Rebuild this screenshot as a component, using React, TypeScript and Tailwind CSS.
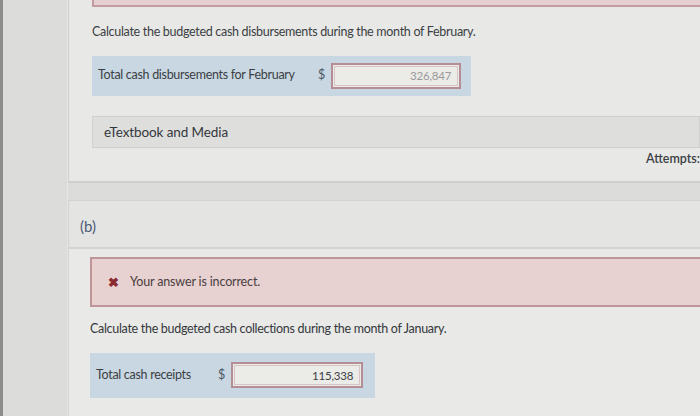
import React from 'react';

const font = { fontFamily: 'Lato, "Open Sans", sans-serif' };

const AnswerRow: React.FC<{ label: string; value: string; muted?: boolean; labelWidth: string; inputWidth: string; boxWidth: string; height: string }> = ({
  label,
  value,
  muted,
  labelWidth,
  inputWidth,
  boxWidth,
  height,
}) => (
  <div className={`flex items-center bg-[#c8d7e2] pl-[6px] ${boxWidth} ${height}`}>
    <span className={`text-[12.5px] tracking-[-0.3px] text-[#3b3f44] ${labelWidth}`}>{label}</span>
    <span className="mr-[6px] text-[12.5px] text-[#4a5663]">$</span>
    <div className={`h-[26px] border-2 border-[#b58e95] bg-[#ebebe8] p-[1px] ${inputWidth}`}>
      <div className="flex h-full items-center justify-end border border-[#d9c3c6] pr-[6px]">
        <span className={`text-[11.5px] tracking-[-0.2px] ${muted ? 'text-[#9a9a9a]' : 'text-[#3b3f44]'}`}>{value}</span>
      </div>
    </div>
  </div>
);

export default function App() {
  return (
    <div className="flex h-[416px] w-[700px] overflow-hidden bg-[#dcdcda]" style={font}>
      <div className="w-[3px] bg-[#8d8d8b]" />
      <div className="w-[65px] border-r border-[#e6e6e4]" />
      <div className="flex flex-1 flex-col">
        {/* part (a) tail */}
        <div className="h-[183px] border-b-2 border-l border-[#cfcfcd] bg-[#e8e8e6] pl-[23px]">
          <div className="h-[7px] border-b-2 border-l-2 border-[#c39ca0] bg-[#e6d0d1]" />
          <p className="mt-[16px] text-[12.5px] tracking-[-0.3px] text-[#3b3f44]">
            Calculate the budgeted cash disbursements during the month of February.
          </p>
          <div className="mt-[14px]">
            <AnswerRow
              label="Total cash disbursements for February"
              value="326,847"
              muted
              labelWidth="w-[220px]"
              inputWidth="w-[130px]"
              boxWidth="w-[379px]"
              height="h-[40px]"
            />
          </div>
          <div className="mt-[20px] flex h-[32px] items-center border border-[#d0d0ce] bg-[#dededc] pl-[11px]">
            <span className="text-[13.5px] tracking-[-0.1px] text-[#34383c]">eTextbook and Media</span>
          </div>
          <div className="mt-[2px] flex justify-end">
            <span className="whitespace-nowrap text-[12.5px] font-semibold text-[#3b3f44]">Attempts:</span>
          </div>
        </div>

        <div className="h-[17px]" />

        {/* part (b) */}
        <div className="flex-1 border-l border-t border-[#d2d2d0] bg-[#e9e9e7]">
          <div className="flex h-[48px] items-center border-b-2 border-[#d3d3d1] bg-[#e4e4e2] pl-[11px] pt-[4px]">
            <span className="text-[15px] text-[#4b5b78]">(b)</span>
          </div>
          <div className="pl-[21px]">
            <div className="mt-[8px] flex h-[50px] items-center border-2 border-r-0 border-[#bf959a] bg-[#e7d1d1] pl-[16px]">
              <span className="mr-[11px] text-[13px] font-bold leading-none text-[#8a2b32]">✖</span>
              <span className="text-[12.5px] tracking-[-0.15px] text-[#4a3e40]">Your answer is incorrect.</span>
            </div>
            <p className="mt-[13px] text-[12.5px] tracking-[-0.3px] text-[#34383c]">
              Calculate the budgeted cash collections during the month of January.
            </p>
            <div className="mt-[14px]">
              <AnswerRow
                label="Total cash receipts"
                value="115,338"
                labelWidth="w-[122px]"
                inputWidth="w-[132px]"
                boxWidth="w-[285px]"
                height="h-[45px]"
              />
            </div>
          </div>
        </div>
      </div>
    </div>
  );
}
